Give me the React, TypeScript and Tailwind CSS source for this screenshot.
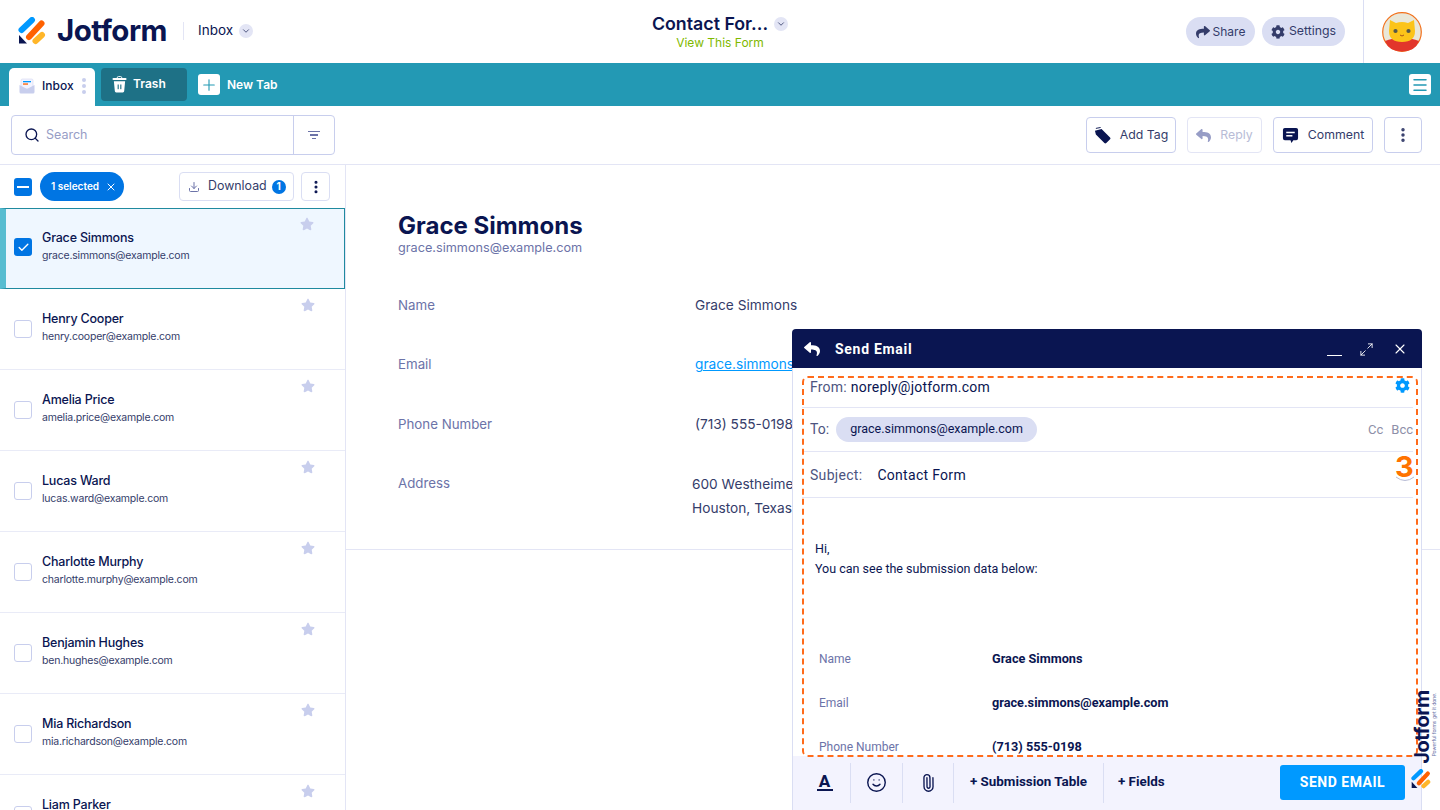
import { ChevronDown, Search, Download, X, Check, Plus, Menu, MoreVertical, Maximize2, Smile, Paperclip } from "lucide-react";
import { FaStar, FaReply, FaShare, FaCog } from "react-icons/fa";

const SUBMISSIONS = [
  { name: "Grace Simmons", email: "grace.simmons@example.com" },
  { name: "Henry Cooper", email: "henry.cooper@example.com" },
  { name: "Amelia Price", email: "amelia.price@example.com" },
  { name: "Lucas Ward", email: "lucas.ward@example.com" },
  { name: "Charlotte Murphy", email: "charlotte.murphy@example.com" },
  { name: "Benjamin Hughes", email: "ben.hughes@example.com" },
  { name: "Mia Richardson", email: "mia.richardson@example.com" },
  { name: "Liam Parker", email: "liam.parker@example.com" },
];

function LogoMark({ className }: { className?: string }) {
  return (
    <svg viewBox="0 0 28 28" className={className}>
      <path d="M3.5 13 L14 3" stroke="#0099ff" strokeWidth="6" strokeLinecap="round" />
      <path d="M11 20 L23.5 6.5" stroke="#ff6100" strokeWidth="6" strokeLinecap="round" />
      <path d="M17.5 24 L24 18" stroke="#ffb629" strokeWidth="6" strokeLinecap="round" />
      <path d="M1 18 L1 26.5 L9 26.5 Z" fill="#0a1551" />
    </svg>
  );
}

function Avatar() {
  return (
    <svg viewBox="0 0 40 40" className="w-10 h-10">
      <circle cx="20" cy="20" r="19.3" fill="#e9e7d8" stroke="#f2711c" strokeWidth="1.2" />
      <path d="M3 29 Q10 26 20 26 Q30 26 37 29 Q33 39.5 20 39.5 Q7 39.5 3 29Z" fill="#e2362b" />
      <path d="M8 8 L14 11 Q20 9 26 11 L32 8 L33 19 Q33 30 20 30 Q7 30 7 19Z" fill="#fcc419" />
      <circle cx="13.5" cy="19" r="2.1" fill="#55584a" />
      <circle cx="26.5" cy="19" r="2.1" fill="#55584a" />
      <path d="M18 23 Q20 25 22 23" stroke="#a8551a" strokeWidth="1" fill="none" />
    </svg>
  );
}

function RoundChevron() {
  return (
    <span className="w-[14px] h-[14px] rounded-full bg-[#e3e5f5] flex items-center justify-center">
      <ChevronDown size={10} strokeWidth={2} className="text-[#343c6a]" />
    </span>
  );
}

function Header() {
  return (
    <header className="h-[63px] flex items-center relative bg-white">
      <div className="flex items-center pl-[18px] w-[480px] -mt-[2px]">
        <LogoMark className="w-[28px] h-[28px]" />
        <span className="ml-[11px] text-[29.5px] leading-none font-bold text-[#0a1551] tracking-[-0.5px]">Jotform</span>
        <span className="w-px h-[18px] bg-[#e3e5f5] ml-[16px]" />
        <span className="ml-[14px] text-[13.5px] text-[#0a1551]">Inbox</span>
        <span className="ml-[6px]"><RoundChevron /></span>
      </div>
      <div className="flex-1 flex flex-col items-center">
        <div className="flex items-center gap-[6px] -mt-[1px]">
          <span className="text-[17.8px] leading-[22px] font-semibold text-[#0a1551]">Contact For...</span>
          <RoundChevron />
        </div>
        <span className="mt-px text-[12px] leading-[14px] text-[#7fb900]">View This Form</span>
      </div>
      <div className="flex items-center w-[480px] justify-end h-full">
        <button className="h-[29px] w-[69px] rounded-full bg-[#dadef3] flex items-center justify-center gap-[3px] text-[12px] text-[#343c6a]">
          <FaShare size={14} />Share
        </button>
        <button className="h-[29px] w-[83px] ml-[7px] rounded-full bg-[#dadef3] flex items-center justify-center gap-[4px] text-[12.3px] text-[#343c6a]">
          <FaCog size={14} />Settings
        </button>
        <span className="w-px h-full bg-[#dadef3] ml-[18px]" />
        <span className="ml-[18px] mr-[18px]"><Avatar /></span>
      </div>
    </header>
  );
}

function TabBar() {
  return (
    <nav className="h-[43px] bg-[#2399b4] flex items-start pt-[5px] pl-[9px] pr-[9px]">
      <div className="w-[86px] h-[38px] bg-white rounded-t-[5px] flex items-center pl-[10px] pb-[3px] text-[12px] font-medium text-[#0a1551]">
        <svg viewBox="0 0 16 16" className="w-[16px] h-[16px]">
          <rect x="2" y="1" width="12" height="10" rx="1.5" fill="#f3f3fe" stroke="#c8ceed" strokeWidth="0.5" />
          <rect x="4" y="3" width="8" height="1.3" fill="#0099ff" />
          <rect x="4" y="5.4" width="5" height="1.3" fill="#ff6100" />
          <path d="M0.5 7 L8 11 L15.5 7 L15.5 14 Q15.5 15.5 14 15.5 L2 15.5 Q0.5 15.5 0.5 14Z" fill="#c8ceed" />
        </svg>
        <span className="ml-[7px]">Inbox</span>
        <span className="ml-[8px] flex flex-col gap-[2px]">
          <i className="w-[4px] h-[4px] rounded-full bg-[#c8ceed]" />
          <i className="w-[4px] h-[4px] rounded-full bg-[#c8ceed]" />
          <i className="w-[4px] h-[4px] rounded-full bg-[#c8ceed]" />
        </span>
      </div>
      <div className="w-[86px] h-[33px] ml-[6px] bg-[#1e7186] rounded-[4px] flex items-center pl-[11px] pb-[1px] text-[12px] font-semibold text-white">
        <svg viewBox="0 0 16 18" className="w-[15px] h-[17px]">
          <rect x="0.5" y="2" width="15" height="2.2" rx="1" fill="#fff" />
          <path d="M5.5 2 Q5.5 0.5 7 0.5 L9 0.5 Q10.5 0.5 10.5 2" fill="none" stroke="#fff" />
          <path d="M2 5.5 L14 5.5 L13 16 Q13 17.5 11.5 17.5 L4.5 17.5 Q3 17.5 3 16Z" fill="#fff" />
          <rect x="6" y="9" width="1.2" height="5" fill="#1e7186" />
          <rect x="8.8" y="9" width="1.2" height="5" fill="#1e7186" />
        </svg>
        <span className="ml-[6px]">Trash</span>
      </div>
      <div className="ml-[11px] h-[33px] flex items-center text-[12px] font-semibold text-white">
        <span className="w-[22px] h-[21px] bg-white rounded-[3px] flex items-center justify-center">
          <Plus size={18} strokeWidth={1.5} className="text-[#2399b4]" />
        </span>
        <span className="ml-[7px]">New Tab</span>
      </div>
      <span className="ml-auto mt-[6px] w-[22px] h-[21px] bg-white rounded-[3px] flex items-center justify-center">
        <Menu size={18} strokeWidth={2} className="text-[#2399b4]" />
      </span>
    </nav>
  );
}

function ToolButton({ children, className }: { children: React.ReactNode; className: string }) {
  return (
    <button className={"h-[36px] rounded-[4px] border flex items-center justify-center bg-white " + className}>
      {children}
    </button>
  );
}

function Toolbar() {
  return (
    <div className="h-[59px] flex items-center border-b border-[#e3e5f5] pl-[11px] pr-[18px] bg-white">
      <div className="w-[324px] h-[40px] border border-[#c8ceed] rounded-[4px] flex">
        <div className="flex-1 flex items-center pl-[12px] text-[12.5px] text-[#979dc6]">
          <Search size={16} className="text-[#0a1551]" />
          <span className="ml-[6px]">Search</span>
        </div>
        <div className="w-[41px] border-l border-[#c8ceed] flex flex-col items-center justify-center gap-[2px]">
          <i className="w-[12px] h-[1.5px] bg-[#6c73a8]" />
          <i className="w-[8px] h-[1.5px] bg-[#6c73a8]" />
          <i className="w-[4px] h-[1.5px] bg-[#6c73a8]" />
        </div>
      </div>
      <div className="ml-auto flex items-center gap-[11px] text-[12.3px] text-[#343c6a]">
        <ToolButton className="w-[90px] border-[#c8ceed] gap-[9px]">
          <svg viewBox="0 0 18 18" className="w-[17px] h-[17px]">
            <path d="M1 4 L8 2 L17 11 Q18 12 17 13 L13 17 Q12 18 11 17 L2 8Z" fill="#0a1551" />
            <path d="M2 1.5 L7 0.5" stroke="#0a1551" strokeWidth="1" />
          </svg>
          Add Tag
        </ToolButton>
        <ToolButton className="w-[75px] border-[#e3e5f5] gap-[9px] text-[#b8bcd6]">
          <FaReply size={15} className="text-[#979dc6]" />Reply
        </ToolButton>
        <ToolButton className="w-[100px] border-[#c8ceed] gap-[9px]">
          <svg viewBox="0 0 18 18" className="w-[17px] h-[17px]">
            <path d="M3 1 L15 1 Q17 1 17 3 L17 12 Q17 14 15 14 L12 14 L10 17 L9 14 L3 14 Q1 14 1 12 L1 3 Q1 1 3 1Z" fill="#0a1551" />
            <rect x="4.5" y="5" width="9" height="1.6" fill="#fff" />
            <rect x="4.5" y="8.5" width="6.5" height="1.6" fill="#fff" />
          </svg>
          Comment
        </ToolButton>
        <ToolButton className="w-[38px] border-[#c8ceed]">
          <MoreVertical size={18} strokeWidth={2.6} className="text-[#343c6a]" />
        </ToolButton>
      </div>
    </div>
  );
}

function ListHeader() {
  return (
    <div className="h-[43px] flex items-center pl-[14px]">
      <span className="w-[18px] h-[18px] rounded-[3px] bg-[#0075e3] flex items-center justify-center">
        <i className="w-[12px] h-[2px] bg-white" />
      </span>
      <span className="ml-[8px] w-[84px] h-[29px] rounded-full bg-[#0075e3] flex items-center justify-center gap-[6px] pl-[4px] text-[10px] font-semibold text-white">
        1 selected <X size={12} />
      </span>
      <button className="ml-[55px] w-[115px] h-[29px] rounded-[4px] border border-[#dadef3] flex items-center pl-[8px] text-[12.4px] text-[#343c6a]">
        <Download size={12} className="text-[#6c73a8]" />
        <span className="ml-[8px]">Download</span>
        <span className="ml-[5px] w-[14px] h-[14px] rounded-full bg-[#0075e3] text-white text-[10px] font-bold flex items-center justify-center">1</span>
      </button>
      <button className="ml-[7px] w-[29px] h-[29px] rounded-[4px] border border-[#dadef3] flex items-center justify-center">
        <MoreVertical size={16} strokeWidth={2.6} className="text-[#0a1551]" />
      </button>
    </div>
  );
}

function SubmissionRow({ name, email, selected }: { name: string; email: string; selected: boolean }) {
  return (
    <div
      className={
        selected
          ? "h-[81px] relative bg-[#eff7ff] border border-[#1f8a9f] border-l-[6px] border-l-[#57bdd1]"
          : "h-[81px] relative border-b border-[#e9ebf7]"
      }
    >
      <span
        className={
          selected
            ? "absolute left-[8px] top-[29px] w-[18px] h-[18px] rounded-[3px] bg-[#0075e3] flex items-center justify-center"
            : "absolute left-[14px] top-[31px] w-[18px] h-[18px] rounded-[3px] bg-white border border-[#c8ceed]"
        }
      >
        {selected && <Check size={13} strokeWidth={2.5} className="text-white" />}
      </span>
      <div className={selected ? "pl-[36px] pt-[20px]" : "pl-[42px] pt-[21px]"}>
        <div className="text-[12.5px] leading-[17px] font-medium tracking-[-0.2px] text-[#0a1551]">{name}</div>
        <div className="mt-[2px] text-[10.5px] leading-[15px] tracking-[-0.2px] text-[#343c6a]">{email}</div>
      </div>
      <FaStar size={14} className={(selected ? "left-[294px] top-[8px]" : "left-[301px] top-[9px]") + " absolute text-[#c8ceed]"} />
    </div>
  );
}

function Detail() {
  const rows = [
    { label: "Name", value: "Grace Simmons", h: "h-[59px]" },
    { label: "Email", value: "grace.simmons@example.com", h: "h-[60px]", link: true },
    { label: "Phone Number", value: "(713) 555-0198", h: "h-[59px]" },
  ];
  return (
    <section className="flex-1 min-w-0">
      <div className="border-b border-[#e3e5f5] h-[385px] pl-[52px] pt-[47px]">
        <h1 className="text-[24px] leading-[28px] font-bold text-[#0a1551]">Grace Simmons</h1>
        <p className="mt-px text-[12.7px] leading-[14px] text-[#6c73a8]">grace.simmons@example.com</p>
        <div className="mt-[40px]">
          {rows.map((r) => (
            <div key={r.label} className={"flex items-start " + r.h}>
              <span className="w-[297px] text-[13.3px] leading-[20px] text-[#6c73a8]">{r.label}</span>
              <span className={r.link ? "text-[13.7px] leading-[20px] text-[#0099ff] underline" : "text-[13.7px] leading-[20px] text-[#343c6a]"}>{r.value}</span>
            </div>
          ))}
          <div className="flex items-start">
            <span className="w-[294px] text-[13.3px] leading-[20px] text-[#6c73a8]">Address</span>
            <span className="-mt-[1px] text-[13.7px] leading-[24px] text-[#343c6a]">600 Westheimer Road<br />Houston, Texas, 77006</span>
          </div>
        </div>
      </div>
    </section>
  );
}

function EmailModal() {
  const table = [
    { label: "Name", value: "Grace Simmons" },
    { label: "Email", value: "grace.simmons@example.com" },
    { label: "Phone Number", value: "(713) 555-0198" },
  ];
  return (
    <div className="absolute left-[792px] top-[329px] w-[630px] h-[481px] bg-white rounded-t-[4px] flex flex-col overflow-hidden" style={{ fontFamily: "Roboto, sans-serif" }}>
      <div className="h-[39px] shrink-0 bg-[#0a1551] flex items-center pl-[12px] pr-[14px] pt-px text-white">
        <FaReply size={16} />
        <span className="ml-[15px] text-[14px] font-bold tracking-[0.7px]">Send Email</span>
        <span className="ml-auto w-[15px] h-px bg-white mt-[12px]" />
        <Maximize2 size={15} strokeWidth={1.4} className="ml-[17px]" />
        <X size={16} strokeWidth={1.6} className="ml-[18px]" />
      </div>

      <div className="flex-1 min-h-0 pl-[9px] pr-[8px] overflow-hidden border-x border-[#dadef3]">
        <div className="h-[40px] border-b border-[#e3e5f5] flex items-start pt-[10px] pl-[8px] text-[14px] leading-[18px] tracking-[0.2px]">
          <span className="text-[#4d5480]">From:</span>
          <span className="ml-[4px] text-[#0a1551]">noreply@jotform.com</span>
          <FaCog size={15} className="ml-auto mr-[3px] text-[#0099ff]" />
        </div>
        <div className="h-[44px] border-b border-[#e3e5f5] flex items-center pl-[8px] text-[14px]">
          <span className="text-[#4d5480]">To:</span>
          <span className="ml-[7px] h-[25px] w-[201px] rounded-full bg-[#dadef3] flex items-center justify-center text-[12.5px] text-[#0a1551]">grace.simmons@example.com</span>
          <span className="ml-auto text-[13px] text-[#8d8fa8]">Cc</span>
          <span className="ml-[8px] text-[13px] text-[#8d8fa8]">Bcc</span>
        </div>
        <div className="h-[46px] border-b border-[#e3e5f5] flex items-center pl-[8px] text-[14px] tracking-[0.3px] pt-[2px]">
          <span className="text-[#4d5480]">Subject:</span>
          <span className="ml-[15px] text-[#0a1551]">Contact Form</span>
        </div>
        <div className="pl-[13px] pt-[41px] text-[12.5px] leading-[20px] text-[#0a1551]">
          <p>Hi,</p>
          <p>You can see the submission data below:</p>
        </div>
        <div className="pl-[17px] pt-[70px]">
          {table.map((t) => (
            <div key={t.label} className="h-[44px] flex text-[12px] leading-[20px]">
              <span className="w-[173px] text-[#6c73a8]">{t.label}</span>
              <span className="font-bold text-[12.7px] text-[#0a1551]">{t.value}</span>
            </div>
          ))}
        </div>
      </div>

      <div className="h-[54px] shrink-0 bg-[#f3f3fe] border-x border-[#dadef3] pb-px flex items-center text-[13.4px] font-bold text-[#0a1551]">
        <span className="w-[58px] pl-[6px] flex flex-col items-center border-r border-[#dadef3] h-[40px] justify-center">
          <span className="text-[17px] leading-[15px] font-extrabold">A</span>
          <i className="w-[16px] h-[2px] bg-[#0a1551]" />
        </span>
        <span className="w-[52px] flex justify-center items-center border-r border-[#dadef3] h-[40px]">
          <Smile size={21} strokeWidth={1.6} />
        </span>
        <span className="w-[51px] flex justify-center items-center border-r border-[#dadef3] h-[40px]">
          <Paperclip size={18} strokeWidth={1.8} className="-rotate-45" />
        </span>
        <span className="w-[150px] flex justify-center items-center border-r border-[#dadef3] h-[40px]">+ Submission Table</span>
        <span className="ml-[14px]">+ Fields</span>
        <button className="ml-auto mr-[16px] w-[125px] h-[35px] rounded-[3px] bg-[#0099ff] text-white text-[14px] font-bold tracking-[0.5px]">SEND EMAIL</button>
      </div>
    </div>
  );
}

export default function App() {
  return (
    <div className="h-[810px] w-[1440px] overflow-hidden relative bg-white" style={{ fontFamily: "Inter, sans-serif" }}>
      <Header />
      <TabBar />
      <Toolbar />
      <div className="flex h-[645px]">
        <aside className="w-[346px] shrink-0 border-r border-[#e3e5f5]">
          <ListHeader />
          <div>
            {SUBMISSIONS.map((s, i) => (
              <SubmissionRow key={s.email} name={s.name} email={s.email} selected={i === 0} />
            ))}
          </div>
        </aside>
        <Detail />
      </div>
      <EmailModal />

      {/* annotation over the modal */}
      <div className="absolute left-[802px] top-[376px] w-[616px] h-[381px] border-2 border-dashed border-[#ff6b1a] rounded-[6px] pointer-events-none" />
      <span className="absolute left-[1395px] top-[450px] text-[29px] leading-[34px] font-bold text-[#ff7300]">3</span>
      <svg viewBox="0 0 20 6" className="absolute left-[1395px] top-[476px] w-[20px] h-[6px]">
        <path d="M1 1 Q10 8 19 1" stroke="#b8bcd6" strokeWidth="1" fill="none" />
      </svg>

      {/* watermark */}
      <div className="absolute left-[1384px] top-[718px] w-[76px] h-[18px] -rotate-90 flex items-center justify-center text-[20px] font-bold text-[#0a1551] tracking-[-0.5px] leading-none">Jotform</div>
      <div className="absolute left-[1396px] top-[722px] w-[76px] h-[5px] -rotate-90 flex items-center justify-center text-[5px] leading-none text-[#6c73a8]">Powerful forms get it done.</div>
      <LogoMark className="absolute left-[1411px] top-[769px] w-[20px] h-[20px]" />
    </div>
  );
}
